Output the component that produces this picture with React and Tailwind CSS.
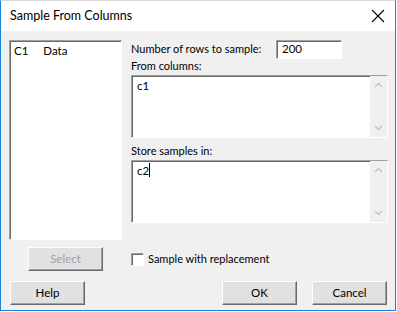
import React from 'react';

const font = { fontFamily: 'Lato, "Liberation Sans", sans-serif' };

const sunken =
  'border border-t-[#a0a0a0] border-l-[#a0a0a0] border-b-white border-r-white shadow-[inset_1px_1px_0_#696969] bg-white';

const raised =
  'border border-t-white border-l-white border-b-[#696969] border-r-[#696969] shadow-[inset_-1px_-1px_0_#a0a0a0] bg-[#e1e1e1]';

function Chevron({ up }) {
  return (
    <svg width="9" height="6" viewBox="0 0 9 6">
      <path
        d={up ? 'M1 5 L4.5 1.5 L8 5' : 'M1 1 L4.5 4.5 L8 1'}
        stroke="#c4c4c4"
        strokeWidth="1.5"
        fill="none"
      />
    </svg>
  );
}

function TextBox({ value, caret }) {
  return (
    <div className={`flex h-[63px] w-[257px] ${sunken}`}>
      <div className="flex-1 pl-[5px] pt-[2px] text-[11.5px] text-black leading-[16px]">
        {value}
        {caret && <span className="inline-block w-[1px] h-[14px] bg-black align-[-2px]" />}
      </div>
      <div className="flex w-[17px] flex-col items-center justify-between bg-[#f0f0f0] py-[6px]">
        <Chevron up />
        <Chevron />
      </div>
    </div>
  );
}

function Button({ children, disabled, className = '' }) {
  return (
    <div
      className={`flex h-[24px] w-[75px] items-center justify-center text-[11.5px] ${raised} ${
        disabled ? 'text-[#a0a0a0]' : 'text-black'
      } ${className}`}
    >
      {children}
    </div>
  );
}

export default function App() {
  return (
    <div className="w-[397px] h-[312px] bg-white" style={font}>
      <div className="flex h-[311px] w-[396px] flex-col border-x border-b border-t border-[#1883d7] border-t-[#d9d9d9]">
        {/* Title bar */}
        <div className="flex h-[30px] items-center justify-between bg-white pl-[9px] pr-[9px]">
          <span className="text-[12.5px] text-black">Sample From Columns</span>
          <svg width="14" height="14" viewBox="0 0 14 14" className="mr-[1px]">
            <path d="M1 1 L13 13 M13 1 L1 13" stroke="#000" strokeWidth="1.1" />
          </svg>
        </div>

        {/* Body */}
        <div className="flex flex-1 flex-col bg-[#f0f0f0] pl-[8px] pt-[9px] text-[11px]">
          <div className="flex gap-[9px]">
            <div className={`h-[200px] w-[113px] ${sunken} pl-[4px] pt-[2px] text-[11.5px] leading-[16px]`}>
              <span>C1</span>
              <span className="ml-[15px]">Data</span>
            </div>

            <div className="flex flex-col">
              <div className="flex h-[19px] items-center">
                <span className="w-[145px] whitespace-nowrap">Number of rows to sample:</span>
                <div className={`h-[19px] w-[66px] ${sunken} pl-[5px] text-[11.5px] leading-[16px]`}>200</div>
              </div>
              <div className="h-[14px] leading-[14px]">From columns:</div>
              <div className="mt-[2px]">
                <TextBox value="c1" />
              </div>
              <div className="mt-[6px] h-[14px] leading-[14px]">Store samples in:</div>
              <div className="mt-[2px]">
                <TextBox value="c2" caret />
              </div>
            </div>
          </div>

          <div className="mt-[7px] flex items-center">
            <Button disabled className="ml-[19px]">Select</Button>
            <div className="ml-[28px] flex items-center">
              <div className={`h-[13px] w-[13px] ${sunken}`} />
              <span className="ml-[4px] whitespace-nowrap">Sample with replacement</span>
            </div>
          </div>

          <div className="mt-[10px] flex items-center">
            <Button className="ml-[1px]">Help</Button>
            <Button className="ml-[137px]">OK</Button>
            <Button className="ml-[15px]">Cancel</Button>
          </div>
        </div>
      </div>
    </div>
  );
}
